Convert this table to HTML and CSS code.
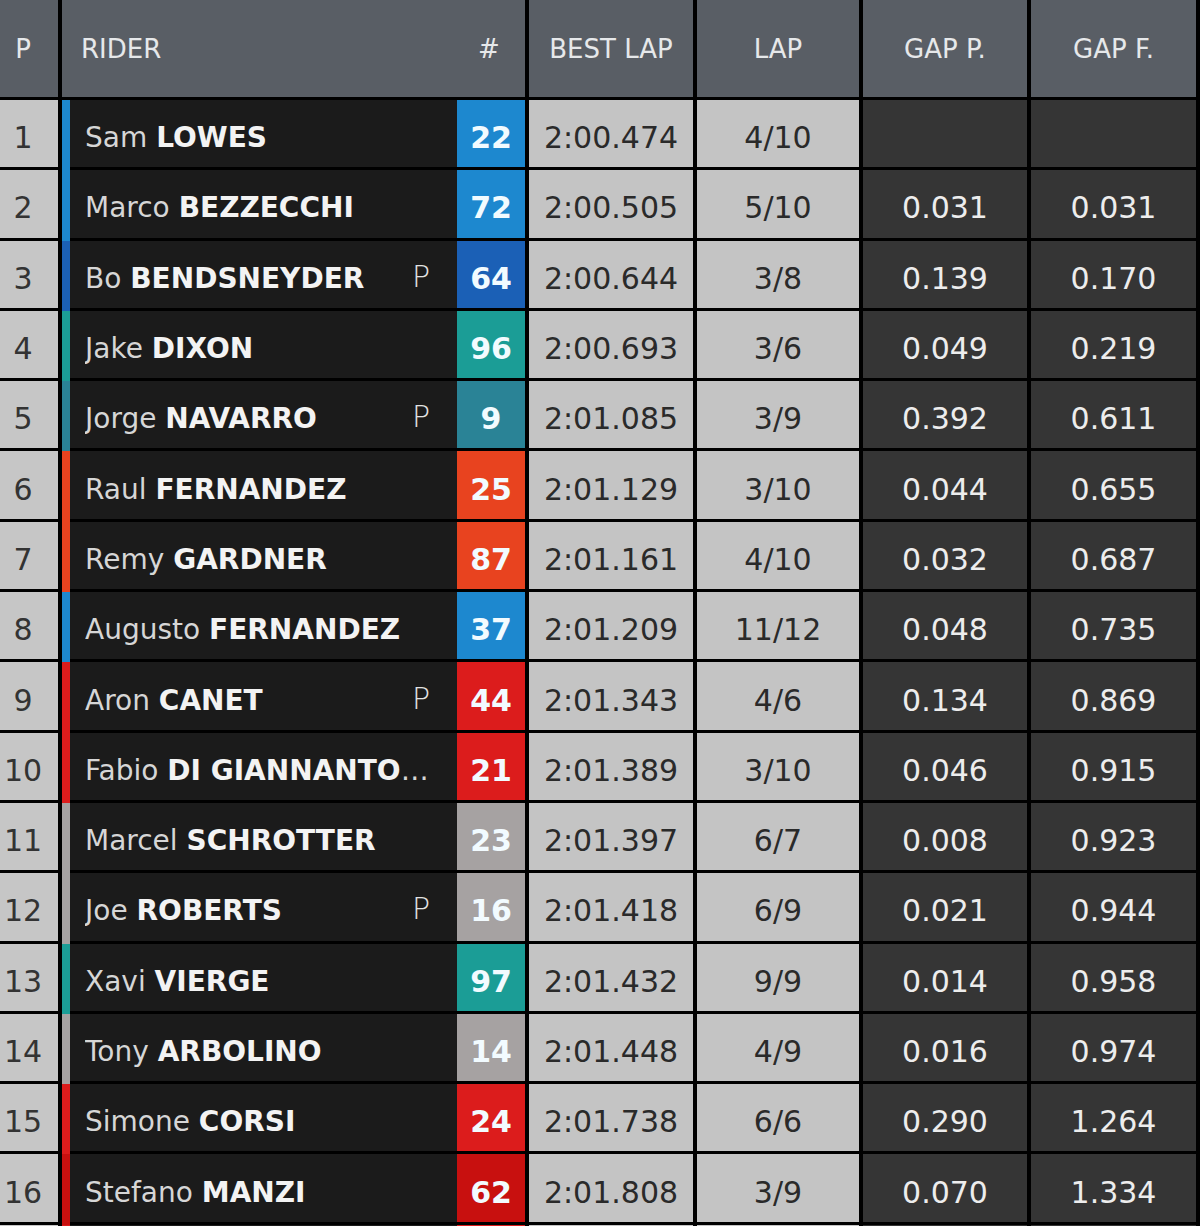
FILE: index.html
```html
<!DOCTYPE html>
<html lang="en">
<head>
<meta charset="utf-8">
<title>Timing</title>
<link rel="stylesheet" href="styles.css">
</head>
<body>
<div class="board">
  <div class="row head">
    <div class="cell pos">P</div>
    <div class="cell rider-h"><span>RIDER</span><span class="hash">#</span></div>
    <div class="cell">BEST LAP</div>
    <div class="cell">LAP</div>
    <div class="cell">GAP P.</div>
    <div class="cell">GAP F.</div>
  </div>

  <div class="row t-blue">
    <div class="cell pos">1</div>
    <div class="rider"><div class="name"><span class="first">Sam</span> <span class="last">LOWES</span></div><span class="badge">22</span></div>
    <div class="cell lt">2:00.474</div><div class="cell lt">4/10</div><div class="cell gap"></div><div class="cell gap"></div>
  </div>
  <div class="row t-blue">
    <div class="cell pos">2</div>
    <div class="rider"><div class="name"><span class="first">Marco</span> <span class="last">BEZZECCHI</span></div><span class="badge">72</span></div>
    <div class="cell lt">2:00.505</div><div class="cell lt">5/10</div><div class="cell gap">0.031</div><div class="cell gap">0.031</div>
  </div>
  <div class="row t-darkblue">
    <div class="cell pos">3</div>
    <div class="rider"><div class="name"><span class="first">Bo</span> <span class="last">BENDSNEYDER</span></div><span class="mark">P</span><span class="badge">64</span></div>
    <div class="cell lt">2:00.644</div><div class="cell lt">3/8</div><div class="cell gap">0.139</div><div class="cell gap">0.170</div>
  </div>
  <div class="row t-teal">
    <div class="cell pos">4</div>
    <div class="rider"><div class="name"><span class="first">Jake</span> <span class="last">DIXON</span></div><span class="badge">96</span></div>
    <div class="cell lt">2:00.693</div><div class="cell lt">3/6</div><div class="cell gap">0.049</div><div class="cell gap">0.219</div>
  </div>
  <div class="row t-petrol">
    <div class="cell pos">5</div>
    <div class="rider"><div class="name"><span class="first">Jorge</span> <span class="last">NAVARRO</span></div><span class="mark">P</span><span class="badge">9</span></div>
    <div class="cell lt">2:01.085</div><div class="cell lt">3/9</div><div class="cell gap">0.392</div><div class="cell gap">0.611</div>
  </div>
  <div class="row t-orange">
    <div class="cell pos">6</div>
    <div class="rider"><div class="name"><span class="first">Raul</span> <span class="last">FERNANDEZ</span></div><span class="badge">25</span></div>
    <div class="cell lt">2:01.129</div><div class="cell lt">3/10</div><div class="cell gap">0.044</div><div class="cell gap">0.655</div>
  </div>
  <div class="row t-orange">
    <div class="cell pos">7</div>
    <div class="rider"><div class="name"><span class="first">Remy</span> <span class="last">GARDNER</span></div><span class="badge">87</span></div>
    <div class="cell lt">2:01.161</div><div class="cell lt">4/10</div><div class="cell gap">0.032</div><div class="cell gap">0.687</div>
  </div>
  <div class="row t-blue">
    <div class="cell pos">8</div>
    <div class="rider"><div class="name"><span class="first">Augusto</span> <span class="last">FERNANDEZ</span></div><span class="badge">37</span></div>
    <div class="cell lt">2:01.209</div><div class="cell lt">11/12</div><div class="cell gap">0.048</div><div class="cell gap">0.735</div>
  </div>
  <div class="row t-red">
    <div class="cell pos">9</div>
    <div class="rider"><div class="name"><span class="first">Aron</span> <span class="last">CANET</span></div><span class="mark">P</span><span class="badge">44</span></div>
    <div class="cell lt">2:01.343</div><div class="cell lt">4/6</div><div class="cell gap">0.134</div><div class="cell gap">0.869</div>
  </div>
  <div class="row t-red">
    <div class="cell pos">10</div>
    <div class="rider"><div class="name"><span class="first">Fabio</span> <span class="last">DI GIANNANTONIO</span></div><span class="badge">21</span></div>
    <div class="cell lt">2:01.389</div><div class="cell lt">3/10</div><div class="cell gap">0.046</div><div class="cell gap">0.915</div>
  </div>
  <div class="row t-grey">
    <div class="cell pos">11</div>
    <div class="rider"><div class="name"><span class="first">Marcel</span> <span class="last">SCHROTTER</span></div><span class="badge">23</span></div>
    <div class="cell lt">2:01.397</div><div class="cell lt">6/7</div><div class="cell gap">0.008</div><div class="cell gap">0.923</div>
  </div>
  <div class="row t-grey">
    <div class="cell pos">12</div>
    <div class="rider"><div class="name"><span class="first">Joe</span> <span class="last">ROBERTS</span></div><span class="mark">P</span><span class="badge">16</span></div>
    <div class="cell lt">2:01.418</div><div class="cell lt">6/9</div><div class="cell gap">0.021</div><div class="cell gap">0.944</div>
  </div>
  <div class="row t-teal">
    <div class="cell pos">13</div>
    <div class="rider"><div class="name"><span class="first">Xavi</span> <span class="last">VIERGE</span></div><span class="badge">97</span></div>
    <div class="cell lt">2:01.432</div><div class="cell lt">9/9</div><div class="cell gap">0.014</div><div class="cell gap">0.958</div>
  </div>
  <div class="row t-grey">
    <div class="cell pos">14</div>
    <div class="rider"><div class="name"><span class="first">Tony</span> <span class="last">ARBOLINO</span></div><span class="badge">14</span></div>
    <div class="cell lt">2:01.448</div><div class="cell lt">4/9</div><div class="cell gap">0.016</div><div class="cell gap">0.974</div>
  </div>
  <div class="row t-red">
    <div class="cell pos">15</div>
    <div class="rider"><div class="name"><span class="first">Simone</span> <span class="last">CORSI</span></div><span class="badge">24</span></div>
    <div class="cell lt">2:01.738</div><div class="cell lt">6/6</div><div class="cell gap">0.290</div><div class="cell gap">1.264</div>
  </div>
  <div class="row t-darkred">
    <div class="cell pos">16</div>
    <div class="rider"><div class="name"><span class="first">Stefano</span> <span class="last">MANZI</span></div><span class="badge">62</span></div>
    <div class="cell lt">2:01.808</div><div class="cell lt">3/9</div><div class="cell gap">0.070</div><div class="cell gap">1.334</div>
  </div>
  <div class="row t-red">
    <div class="cell pos"></div>
    <div class="rider"><div class="name"></div><span class="badge"></span></div>
    <div class="cell lt"></div><div class="cell lt"></div><div class="cell gap"></div><div class="cell gap"></div>
  </div>
</div>
</body>
</html>
```

FILE: styles.css
```css
html, body {
  margin: 0;
  padding: 0;
  background: #000;
}

body {
  width: 1200px;
  height: 1226px;
  overflow: hidden;
  font-family: "DejaVu Sans", "Liberation Sans", sans-serif;
}

.board {
  display: flex;
  flex-direction: column;
  gap: 3px;
  padding-right: 4px;
  background: #000;
}

.row {
  display: grid;
  grid-template-columns: 58px 463px 164px 162px 164px 165px;
  column-gap: 4px;
  height: 67.3px;
  flex-shrink: 0;
}

.row.head {
  height: 97px;
}

.cell {
  display: flex;
  align-items: center;
  justify-content: center;
  box-sizing: border-box;
  padding-top: 8px;
  font-size: 30px;
  white-space: nowrap;
}

.head .cell {
  padding-top: 0;
  background: #595e65;
  color: #e6e8ea;
  font-size: 26px;
}

.pos {
  background: #c6c6c6;
  color: #333;
  padding-right: 12px;
}

.head .pos {
  padding-right: 12px;
}

.head .rider-h {
  justify-content: space-between;
  padding-left: 19px;
}

.hash {
  width: 68px;
  text-align: center;
  margin-right: 2px;
}

.lt {
  background: #c4c4c4;
  color: #2a2a2a;
}

.gap {
  background: #353535;
  color: #ededed;
}

.rider {
  position: relative;
  display: grid;
  grid-template-columns: 1fr 45px 68px;
  padding-left: 15px;
  background: #1b1b1b;
  border-left: 8px solid var(--team);
}

.rider::after {
  content: "";
  position: absolute;
  left: -8px;
  top: 100%;
  width: 8px;
  height: 3px;
  background: var(--team);
}

.name {
  grid-column: 1 / 3;
  grid-row: 1;
  align-self: center;
  padding-top: 8px;
  padding-right: 17px;
  font-size: 28px;
  color: #d6d6d6;
  white-space: nowrap;
  overflow: hidden;
  text-overflow: ellipsis;
}

.last {
  font-weight: bold;
  color: #f3f3f3;
}

.mark {
  grid-column: 2;
  grid-row: 1;
  align-self: center;
  padding-top: 4px;
  font-size: 30px;
  font-weight: 200;
  color: #e2e2e2;
}

.badge {
  grid-column: 3;
  grid-row: 1;
  display: flex;
  align-items: center;
  justify-content: center;
  padding-top: 8px;
  background: var(--team);
  color: #f2fbff;
  font-size: 30px;
  font-weight: bold;
}

.t-blue { --team: #1d88cf; }
.t-darkblue { --team: #1b60b6; }
.t-teal { --team: #1b9d96; }
.t-petrol { --team: #2a8396; }
.t-orange { --team: #e8431f; }
.t-red { --team: #dc1c1c; }
.t-darkred { --team: #c8100f; }
.t-grey { --team: #a6a2a2; }
```
